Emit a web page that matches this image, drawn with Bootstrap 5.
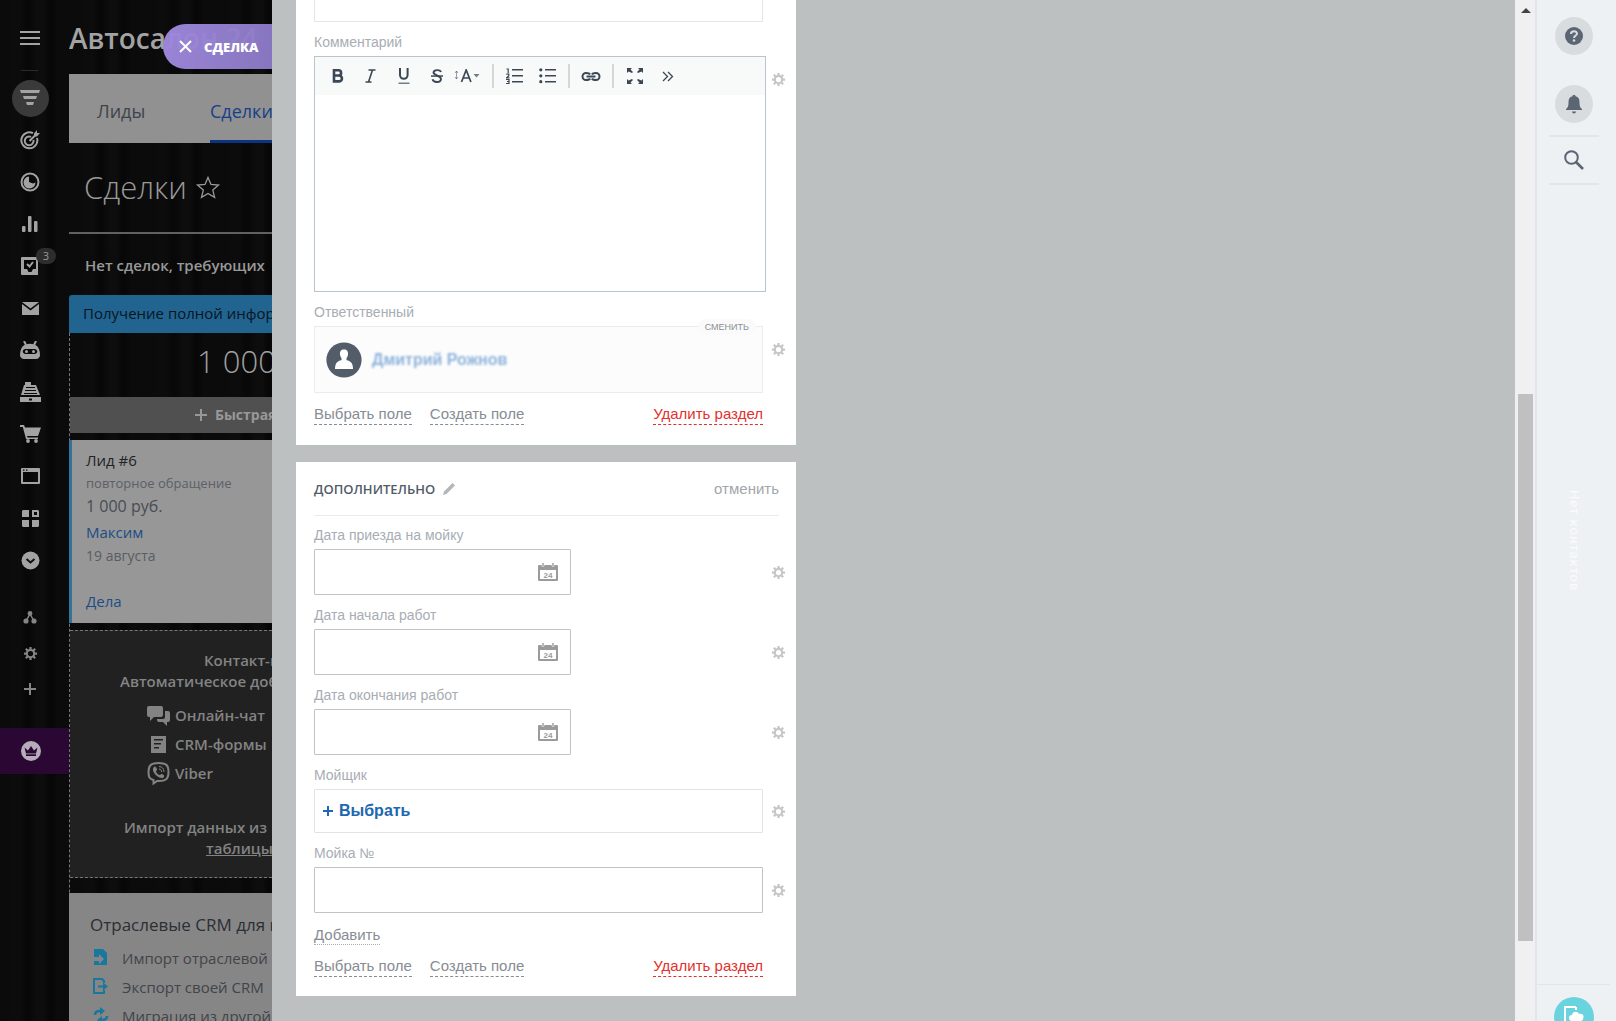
<!DOCTYPE html>
<html lang="ru">
<head>
<meta charset="utf-8">
<meta name="viewport" content="width=device-width, initial-scale=1">
<title>Сделка</title>
<link rel="stylesheet" href="https://cdn.jsdelivr.net/npm/bootstrap@5.3.0/dist/css/bootstrap.min.css">
<script src="https://cdn.jsdelivr.net/npm/bootstrap@5.3.0/dist/js/bootstrap.bundle.min.js"></script>
<style>
body{font-family:"Open Sans","Noto Sans",sans-serif;font-size:15px;line-height:20px;
  background:repeating-linear-gradient(90deg,#0b0b0b 0 9px,#0c0c0c 13px 20px,#080808 26px 30px,#0d0d0d 37px 44px,#070707 49px 52px,#0b0b0b 58px 73px)}
a{text-decoration:none}
button{background:none;border:0;padding:0;color:inherit}
svg{display:block;flex:none;fill:currentColor}
.ln{fill:none;stroke:currentColor}
/* left menu */
.menu{width:69px;color:#a3a3a3}
.menu a{color:inherit;height:42px;padding-right:9px}
.menu .burger{height:77px;padding-bottom:2px;position:relative}
.menu .burger::after{content:"";position:absolute;left:21px;top:70px;width:17px;height:1px;background:#2a2a2a}
.menu .disc{width:37px;height:37px;background:#3a3a3a}
.menu .cnt{left:36px;top:3px;width:20px;height:16px;border-radius:8px;background:#2d2d2d;color:#999;font-size:11px;line-height:16px}
.menu .sm-item{height:36px;color:#858585}
.menu .crown{height:46px;background:#2b0733;color:#b5adb8;padding-right:7px}
.menu .gap-a{height:18px}
.menu .gap-b{height:21px}
/* page behind the slider */
.under{width:203px;white-space:nowrap}
.brand{height:74px;padding-top:19px;font-size:28px;line-height:38px;font-weight:600;color:#a3a3a3}
.tabs{height:69px;background:#919191;font-size:18px;font-weight:500}
.tabs a{color:#3f434b;line-height:75px;flex:none}
.tabs a.t1{margin-left:28px;width:113px}
.tabs a.on{color:#163f8a;border-bottom:3px solid #0c3580;padding-right:20px}
.ttl{height:91px;padding-left:15px;padding-bottom:2px;border-bottom:2px solid #616161;color:#9a9a9a;gap:6px}
.ttl h1{font-size:31px;font-weight:300;line-height:40px}
.note{height:61px;line-height:63px;padding-left:16px;font-size:15px;font-weight:600;color:#999}
.stage{height:38px;line-height:37px;padding-left:14px;font-size:15px;font-weight:400;background:#226490;color:#09151e;border-radius:3px 0 0 0}
.lane{border-left:1px dashed #777}
.sum{height:64px;padding-left:127px;font-size:31px;line-height:57px;font-weight:300;color:#a0a0a0}
.quick{height:36px;margin-bottom:7px;padding-left:125px;font-size:14px;font-weight:700;background:#505050;color:#989898}
.deal{margin-left:-1px;height:183px;margin-bottom:7px;padding:11px 0 0 14px;border-left:3px solid #36739a;background:#979797;color:#474c55}
.deal a{color:#1c4d85}
.d1{color:#1f2226;font-size:15px;line-height:19px;font-weight:500}
.d2{font-size:13px;line-height:26px;color:#5c6068}
.d3{font-size:16px;line-height:20px}
.d4{line-height:32px}
.d5{font-size:14px;line-height:16px;color:#595d63}
.d6{line-height:20px;margin-top:27px}
.cc{height:248px;margin-bottom:15px;background:#212121;border-top:1px dashed #777;border-bottom:1px dashed #777;font-weight:600;color:#838383;font-size:15px;line-height:21px;padding-top:19px}
.cc .ch{height:29px;padding-left:77px;gap:5px}
.c1{padding-left:134px}
.c2{padding-left:50px;margin-bottom:9px}
.c3{padding-left:54px;margin-top:29px}
.c4{padding-left:136px}
.ind{margin-left:-1px;height:160px;background:#868686;padding:21px 0 0 21px;color:#404348}
.ind h2{font-size:17px;line-height:22px;font-weight:500;color:#2c2f34;margin-bottom:7px}
.ind a{height:29px;gap:13px;font-size:15px;font-weight:500;color:#414449;padding-left:3px}
.ind svg{color:#17779c}
.tag{left:163px;top:24px;width:109px;height:45px;border-radius:23px 0 0 23px;background:linear-gradient(90deg,rgba(158,136,220,.97),rgba(140,122,198,.96));color:#fff;font-size:13px;font-weight:800;padding-left:16px;gap:12px}
/* slider */
.slider{background:#bcc0c1;font-family:"Liberation Sans",Arial,sans-serif;padding-left:24px}
.sec{width:500px;background:#fff;padding-left:18px}
.sec + .sec{margin-top:17px}
.s1{height:445px}
.s2{height:534px}
.lbl{display:block;font-size:14px;line-height:28px;color:#a8adb4}
.l1,.l2{margin-top:6px}
.fld{width:449px}
.top-f{height:22px;border:1px solid #e1e7ed;border-top:0}
.box{border-radius:1px;background:#fff;display:block}
.inp{height:46px;border:1px solid #bfc4cb}
.fld .inp{width:100%}
.dt{width:257px;position:relative}
.dt svg{position:absolute;right:13px;top:14px;color:#9b9b9b}
.gr{width:30px;color:#c6c6c6}
.gi{margin:auto}
.g-top{align-self:flex-start;margin-left:-3px;padding-top:16px}
.g-mid{align-self:flex-start;padding-top:16px}
.row-f{margin-bottom:6px}
.editor{width:452px;height:236px;border:1px solid #b9c4cd}
.bar{height:38px;background:#f8faf9;padding-left:6px;color:#3b4754}
.bar button{width:33px;height:32px;display:flex;align-items:center;justify-content:center}
.bar .fs-b{width:28px}
.bar .vr-s{width:2px;height:24px;background:#d3d7da}
.v1{margin:0 4px 0 11px}
.v2{margin:0 4px}
.v3{margin:0 4px 0 5px}
.editor textarea{border:0;width:100%;height:196px;resize:none;display:block;outline:0}
.resp{height:67px;border:1px solid #ececee;background:#fcfcfc;padding-left:11px;gap:10px;position:relative}
.resp .chg{position:absolute;right:6px;top:-8px;height:16px;padding:0 7px;border-radius:8px;background:#fafafa;font-size:9px;line-height:16px;color:#8b9095}
.who{font-size:16px;font-weight:700;color:#8db3dc;filter:blur(1px)}
.acts{width:449px;font-size:15px;line-height:18px;gap:18px}
.acts a,.add{color:#868c93;border-bottom:1px dashed #868c93}
.acts a{padding-bottom:1px}
.acts a.del{color:#e2302d;border-color:#e2302d}
.a1{margin-top:12px}
.a2{margin-top:12px}
.add{display:inline-block;font-size:15px;line-height:18px;border-bottom:1px dotted #a8adb4;margin-top:7px}
.hd{width:465px;height:54px;border-bottom:1px solid #e9ebee;margin-bottom:5px}
.hd h2{font-size:13px;line-height:18px;font-family:"Open Sans",sans-serif;font-weight:600;color:#525c69}
.hd svg{color:#b3b7bc}
.hd .cancel{font-size:15px;color:#a3a6aa}
.pick{height:44px;border:1px solid #e2e3e5;color:#2067b0;font-size:16px;font-weight:700;padding-left:8px;width:100%;gap:6px}
/* scrollbar and right rail */
.sbar{width:20px;background:#f0f0f0;padding:8px 2px 0 3px}
.sbar i{display:block;width:15px;background:#c0c0c0;margin-top:381px;height:547px}
.rail{width:81px;background:#edf1f4;border-left:2px solid #e0e6ed;color:#5b6573;padding-right:6px}
.rail > *{flex:none}
.rail .rd{width:38px;height:38px;background:#d8dcdf;display:flex;align-items:center;justify-content:center}
.r1{margin-top:17px}
.r2{margin-top:30px}
.rail .rl{width:50px;height:50px;border:solid #e2e6e9;border-width:2px 0;margin-top:12px;display:flex;align-items:center;justify-content:center}
.nocon{writing-mode:vertical-rl;color:#fafbfd;font-size:13px;margin-top:305px;height:494px;font-family:Roboto,sans-serif;letter-spacing:1px}
.cloud{width:100%;border-top:1px solid #dfe6ec;padding-top:12px}
.cloud span{width:40px;height:40px;background:#69d4e0;color:#fff;display:flex;justify-content:center;padding-top:9px}
</style>
</head>
<body class="vh-100 overflow-hidden">
<svg width="0" height="0" class="position-absolute"><defs>
<symbol id="gear" viewBox="0 0 16 16"><path fill-rule="evenodd" d="M6.800 1h2.400v2.100l1.400.6 1.600-1.500 1.600 1.600-1.500 1.600.6 1.400H15v2.400h-2.100l-.6 1.400 1.500 1.600-1.600 1.600-1.600-1.500-1.400.6V15H6.800v-2.100l-1.400-.6-1.600 1.500-1.600-1.600 1.500-1.600-.6-1.400H1V6.800h2.100l.6-1.400-1.500-1.600 1.600-1.600 1.600 1.500 1.400-.6zM8 5.200a2.800 2.800 0 1 0 0 5.600 2.800 2.800 0 0 0 0-5.600z"/></symbol>
<symbol id="cal" viewBox="0 0 20 18"><path fill-rule="evenodd" d="M1 2h2.500c0 2 3 2 3 0h7c0 2 3 2 3 0H19a1 1 0 0 1 1 1v14a1 1 0 0 1-1 1H1a1 1 0 0 1-1-1V3a1 1 0 0 1 1-1zm1 5v9h16V7z"/><path d="M4.300 0h1.400v3H4.300zM14.300 0h1.400v3h-1.400z"/><text x="10" y="14.500" text-anchor="middle" font-family="Liberation Sans" font-size="8" font-weight="700">24</text></symbol>
</defs></svg>
<div class="d-flex h-100 position-relative">
<nav class="menu flex-shrink-0 d-flex flex-column" aria-label="Меню">
  <a href="#" class="burger d-flex align-items-center justify-content-center"><svg width="20" height="16"><path d="M0 1h20v2H0zM0 7h20v2H0zM0 13h20v2H0z"/></svg></a>
  <a href="#" class="d-flex align-items-center justify-content-center"><span class="disc rounded-circle d-flex align-items-center justify-content-center"><svg width="20" height="16"><path d="M0 0h20l-1 3H1zM3 6h14l-1 3H4zM6 12h8l-1 3H7z"/></svg></span></a>
  <a href="#" class="d-flex align-items-center justify-content-center"><svg width="20" height="20"><g class="ln" stroke-width="2"><path d="M13 3.200A8 8 0 1 0 17 8"/><path d="M11 6.800A4.400 4.400 0 1 0 13.500 10M9.500 11 17 3.500"/></g><path d="M14 3.500 17 0v3h3l-3 3.500h-3z"/></svg></a>
  <a href="#" class="d-flex align-items-center justify-content-center"><svg width="20" height="20"><circle class="ln" cx="10" cy="10" r="8.500" stroke-width="2"/><path d="M9 4.500V10l4 1.500 2.500-1A6 6 0 1 1 9 4.500z"/></svg></a>
  <a href="#" class="d-flex align-items-center justify-content-center"><svg width="16" height="16"><rect y="10" width="3.500" height="6" rx="1"/><rect x="6" width="3.500" height="16" rx="1"/><rect x="12" y="5" width="3.500" height="11" rx="1"/></svg></a>
  <a href="#" class="d-flex align-items-center justify-content-center position-relative"><svg width="18" height="18"><path fill-rule="evenodd" d="M1 0h16v18H1a1 1 0 0 1-1-1V1a1 1 0 0 1 1-1zm2 3v9h3l1.500 3h3L12 12h3V3z"/><path class="ln" stroke-width="2" d="m6 7 2.500 2.500L12 5"/></svg><span class="cnt position-absolute text-center">3</span></a>
  <a href="#" class="d-flex align-items-center justify-content-center"><svg width="17" height="13"><path d="M0 0h17L8.500 6.500zM0 2l8.500 6.500L17 2v11H0z"/></svg></a>
  <a href="#" class="d-flex align-items-center justify-content-center"><svg width="20" height="18"><path class="ln" stroke-width="2" d="m4 0 2 4M16 0l-2 4"/><path fill-rule="evenodd" d="M3 5c4-3 10-3 14 0 2 2 3 5 3 10-1 2-2 3-4 3H4c-2 0-3-1-4-3 0-5 1-8 3-10zm2 3c-3 1-3 4 0 5h10c3-1 3-4 0-5z"/><circle cx="6.500" cy="10.500" r="1.500"/><circle cx="13.500" cy="10.500" r="1.500"/></svg></a>
  <a href="#" class="d-flex align-items-center justify-content-center"><svg width="21" height="20"><path fill-rule="evenodd" d="M5 3V0h6v3h5l4 10H1L4 3zm1 2v1h9V5zM5 8v1h11V8zm-1 3v1h13v-1z"/><path fill-rule="evenodd" d="M0 15h21v5H0zm9 1.500v2h3v-2z"/></svg></a>
  <a href="#" class="d-flex align-items-center justify-content-center"><svg width="21" height="18"><path d="M0 0h4l1 2.500h16L18 11H7l.5 1.500H18V14H6L2.800 2H0z"/><circle cx="8" cy="16" r="1.900"/><circle cx="16" cy="16" r="1.900"/></svg></a>
  <a href="#" class="d-flex align-items-center justify-content-center"><svg width="19" height="16"><path fill-rule="evenodd" d="M1 0h17a1 1 0 0 1 1 1v14a1 1 0 0 1-1 1H1a1 1 0 0 1-1-1V1a1 1 0 0 1 1-1zm1 4v10h15V4zm0-2.500v1.300h1.500V1.500zm3 0v1.300h1.500V1.500z"/></svg></a>
  <a href="#" class="d-flex align-items-center justify-content-center"><svg width="17" height="17"><path fill-rule="evenodd" d="M1 0h6v7H0V1zM10 0h6l1 1v6h-7zm2 2v3h3V2zM0 10h7v7H1l-1-1zM10 10h7v6l-1 1h-6z"/></svg></a>
  <a href="#" class="d-flex align-items-center justify-content-center"><svg width="19" height="19"><circle cx="9.500" cy="9.500" r="9"/><path fill="none" stroke="#111" stroke-width="2" d="m5.500 8 4 3.500 4-3.500"/></svg></a>
  <div class="gap-a"></div>
  <a href="#" class="sm-item d-flex align-items-center justify-content-center"><svg width="14" height="13"><circle cx="7" cy="2.500" r="2.400"/><circle cx="3" cy="10" r="2.600"/><circle cx="11" cy="10" r="2.600"/><path class="ln" stroke-width="1.500" d="m3 10 4-7 4 7"/></svg></a>
  <a href="#" class="sm-item d-flex align-items-center justify-content-center"><svg width="15" height="15"><use href="#gear"/></svg></a>
  <a href="#" class="sm-item d-flex align-items-center justify-content-center"><svg width="12" height="12"><path d="M5 0h2v5h5v2H7v5H5V7H0V5h5z"/></svg></a>
  <div class="gap-b"></div>
  <a href="#" class="crown d-flex align-items-center justify-content-center"><svg width="20" height="20"><circle cx="10" cy="10" r="10"/><path fill="#2b0733" d="m3.500 6.500 3.500 3 3-4.500 3 4.500 3.500-3L15 12.500H5zM5 13.300h10V15H5z"/></svg></a>
</nav>
<main class="under flex-shrink-0 overflow-hidden">
  <div class="brand">Автосалон 24</div>
  <nav class="tabs d-flex"><a href="#" class="t1">Лиды</a><a href="#" class="on">Сделки</a></nav>
  <div class="ttl d-flex align-items-center"><h1 class="mb-0">Сделки</h1><svg width="31" height="24"><path class="ln" stroke-width="1.300" d="m15 2.500 3 7 7.500.6-5.700 5 1.800 7.300L15 18.500l-6.500 3.900 1.800-7.300-5.800-5L12 9.500z"/></svg></div>
  <div class="note">Нет сделок, требующих</div>
  <div class="stage">Получение полной информации</div>
  <div class="lane">
    <div class="sum">1 000 руб.</div>
    <div class="quick d-flex align-items-center"><svg width="12" height="12"><path d="M5 0h2v5h5v2H7v5H5V7H0V5h5z"/></svg><span class="ms-2">Быстрая сделка</span></div>
    <article class="deal">
      <div class="d1">Лид #6</div>
      <div class="d2">повторное обращение</div>
      <div class="d3">1 000 руб.</div>
      <a href="#" class="d4 d-block">Максим</a>
      <div class="d5">19 августа</div>
      <a href="#" class="d6 d-block">Дела</a>
    </article>
    <section class="cc">
      <div class="c1">Контакт-центр</div>
      <div class="c2">Автоматическое добавление</div>
      <div class="ch d-flex align-items-center"><svg width="23" height="20"><path d="M2 0h12a2 2 0 0 1 2 2v7a2 2 0 0 1-2 2H7l-4 4v-4H2a2 2 0 0 1-2-2V2a2 2 0 0 1 2-2z"/><path d="M18 5h3a2 2 0 0 1 2 2v7a2 2 0 0 1-2 2h-1v4l-4-4h-4a2 2 0 0 1-2-2v-1h6a2 2 0 0 0 2-2z"/></svg>Онлайн-чат</div>
      <div class="ch d-flex align-items-center"><svg width="23" height="17"><path fill-rule="evenodd" d="M4 0h15v17H4zm3 3v1.500h9V3zm0 4v1.500h7V7zm0 4v1.500h5V11z"/></svg>CRM-формы</div>
      <div class="ch d-flex align-items-center"><svg width="23" height="23"><path class="ln" stroke-width="2" d="M11.500 1C4 1 1.500 3.500 1.500 10c0 5 1 7 5 8v3.500L10 19c9 .5 11.500-2 11.500-9S19 1 11.500 1z"/><path d="M7 5c1-1 2 0 3 2 .5 1-1 1.500-1 2.500.5 2 2 3 3.500 3.500 1 0 1.500-1.500 2.500-1 2 1 3 2 1.500 3.500C14 18 5 12 6 6.500z"/><path class="ln" d="M12 4.500c3 0 5 2 5 5.500M12 7c1.800.2 2.600 1.200 2.600 3"/></svg>Viber</div>
      <div class="c3">Импорт данных из</div>
      <div class="c4"><u>таблицы</u></div>
    </section>
    <section class="ind">
      <h2>Отраслевые CRM для вас</h2>
      <a href="#" class="d-flex align-items-center"><svg width="16" height="17"><path fill-rule="evenodd" d="M1 0h9l4 4v12H1v-4h5v3l5-5-5-5v3H1z"/></svg>Импорт отраслевой</a>
      <a href="#" class="d-flex align-items-center"><svg width="16" height="17"><path class="ln" stroke-width="2" d="M11 5V3L9 1H1v14h10v-3"/><path d="M5 7.500h5V4.500l5 4-5 4V9.500H5z"/></svg>Экспорт своей CRM</a>
      <a href="#" class="d-flex align-items-center"><svg width="16" height="17"><path class="ln" stroke-width="2.500" d="M2 8c0-3 2-4 5-4h3M14 9c0 3-2 4-5 4H6"/><path d="m7 0 5 4-5 4zM9 9l-5 4 5 4z"/></svg>Миграция из другой</a>
    </section>
  </div>
</main>
<button class="tag position-absolute d-flex align-items-center"><svg width="13" height="13"><path class="ln" stroke-width="2" d="m1 1 11 11M12 1 1 12"/></svg>СДЕЛКА</button>
<div class="slider flex-grow-1">
  <section class="sec s1">
    <div class="fld top-f"></div>
    <span class="lbl l1">Комментарий</span>
    <div class="d-flex">
      <div class="editor">
        <div class="bar d-flex align-items-center">
          <button aria-label="Полужирный"><svg width="12" height="14"><path class="ln" stroke-width="2.600" d="M2 1.300h4.500a2.600 2.600 0 0 1 0 5.200H2zm0 5.200h5a2.900 2.900 0 0 1 0 5.900H2z"/></svg></button>
          <button aria-label="Курсив"><svg width="11" height="14"><path class="ln" stroke-width="1.600" d="M3.500 1h7M.5 13h6M7.500 1l-4 12"/></svg></button>
          <button aria-label="Подчёркнутый"><svg width="12" height="16"><path class="ln" stroke-width="2" d="M2 0v7a3.800 3.800 0 0 0 7.600 0V0"/><path opacity=".7" d="M.5 14.500h11V16H.5z"/></svg></button>
          <button aria-label="Зачёркнутый"><svg width="12" height="14"><path class="ln" stroke-width="1.900" d="M10 3C9 .5 3 .3 2.500 3.500 2.300 6.500 9.800 6.300 10 10c-.3 4-7.500 4-8.500.3"/><path d="M0 6.300h12v1.500H0z"/></svg></button>
          <button class="fs-b" aria-label="Размер шрифта"><svg width="26" height="14"><path class="ln" opacity=".5" d="M2.500 2v8M1 4l1.500-2L4 4M1 8l1.500 2L4 8"/><path class="ln" stroke-width="1.700" d="m7.500 13 4.700-12 4.700 12M9 9h6.500"/><path opacity=".7" d="M19.500 5h6l-3 3.500z"/></svg></button>
          <span class="vr-s v1"></span>
          <button aria-label="Нумерованный список"><svg width="17" height="16"><path d="M6 1h11v1.500H6zM6 7h11v1.500H6zM6 13h11v1.500H6z"/><path class="ln" stroke-width="1.200" d="M.5 1h1.700v4M.3 6.200h2.500v1.500L.5 9.800h3M0 11.500h3v4H0M1 13.500h2"/></svg></button>
          <button aria-label="Маркированный список"><svg width="17" height="16"><path d="M6 1h11v1.500H6zM6 7h11v1.500H6zM6 13h11v1.500H6z"/><circle cx="1.800" cy="1.800" r="1.600"/><circle cx="1.800" cy="7.800" r="1.600"/><circle cx="1.800" cy="13.700" r="1.600"/></svg></button>
          <span class="vr-s v2"></span>
          <button aria-label="Ссылка"><svg width="20" height="9"><g class="ln" stroke-width="2"><path d="M9 2.500C8.500 1.300 7.500 1 5 1a3.500 3.500 0 0 0 0 7c2.500 0 3.500-.3 4-1.500M11 2.500C11.500 1.300 12.500 1 15 1a3.500 3.500 0 0 1 0 7c-2.500 0-3.500-.3-4-1.500M5.500 4.500h9"/></g></svg></button>
          <span class="vr-s v3"></span>
          <button aria-label="На весь экран"><svg width="16" height="16"><path d="M0 0h5L3.500 1.500 6 4 5 5 1.500 3.500 0 5zM16 0v5l-1.500-1.500L11 5l-1-1 2.500-2.500L11 0zM0 16v-5l1.500 1.500L5 11l1 1-2.500 2.500L5 16zM16 16h-5l1.500-1.500L10 12l1-1 3.500 1.500L16 11z"/></svg></button>
          <button aria-label="Ещё"><svg width="12" height="11"><path class="ln" stroke-width="1.300" d="m1 1 4.500 4.500L1 10M6 1l4.500 4.500L6 10"/></svg></button>
        </div>
        <textarea aria-label="Комментарий"></textarea>
      </div>
      <button class="gr g-top" aria-label="Настройки поля"><svg class="gi" width="15" height="15"><use href="#gear"/></svg></button>
    </div>
    <span class="lbl l2">Ответственный</span>
    <div class="d-flex">
      <div class="fld resp d-flex align-items-center">
        <svg width="36" height="36"><circle cx="18" cy="18" r="17.600" fill="#535c69"/><path fill="#fff" d="M18 7.500c3.200 0 4.300 2 4 5-.2 2-1 3-1.500 3.500V18c3 1 6.500 2 6.500 9H9c0-7 3.500-8 6.500-9v-2c-.5-.5-1.300-1.500-1.500-3.500-.3-3 .8-5 4-5z"/></svg>
        <a href="#" class="who">Дмитрий Рожнов</a>
        <button class="chg">СМЕНИТЬ</button>
      </div>
      <button class="gr g-mid" aria-label="Настройки поля"><svg class="gi" width="15" height="15"><use href="#gear"/></svg></button>
    </div>
    <div class="acts a1 d-flex"><a href="#">Выбрать поле</a><a href="#">Создать поле</a><a href="#" class="del ms-auto">Удалить раздел</a></div>
  </section>
  <section class="sec s2">
    <header class="hd d-flex align-items-center"><h2 class="mb-0">ДОПОЛНИТЕЛЬНО</h2><svg class="ms-2" width="13" height="12"><path d="m0 12 1-3.500L9.500 0l2.500 2.500L3.500 11z"/></svg><button class="cancel ms-auto">отменить</button></header>
    <label class="lbl" for="f1">Дата приезда на мойку</label>
    <div class="d-flex row-f align-items-center"><div class="fld"><div class="dt"><input id="f1" class="box inp" type="text"><svg width="20" height="18"><use href="#cal"/></svg></div></div><button class="gr" aria-label="Настройки поля"><svg class="gi" width="15" height="15"><use href="#gear"/></svg></button></div>
    <label class="lbl" for="f2">Дата начала работ</label>
    <div class="d-flex row-f align-items-center"><div class="fld"><div class="dt"><input id="f2" class="box inp" type="text"><svg width="20" height="18"><use href="#cal"/></svg></div></div><button class="gr" aria-label="Настройки поля"><svg class="gi" width="15" height="15"><use href="#gear"/></svg></button></div>
    <label class="lbl" for="f3">Дата окончания работ</label>
    <div class="d-flex row-f align-items-center"><div class="fld"><div class="dt"><input id="f3" class="box inp" type="text"><svg width="20" height="18"><use href="#cal"/></svg></div></div><button class="gr" aria-label="Настройки поля"><svg class="gi" width="15" height="15"><use href="#gear"/></svg></button></div>
    <label class="lbl" for="f4">Мойщик</label>
    <div class="d-flex row-f align-items-center"><div class="fld"><button id="f4" class="box pick d-flex align-items-center"><svg width="10" height="10"><path d="M4 0h2v4h4v2H6v4H4V6H0V4h4z"/></svg>Выбрать</button></div><button class="gr" aria-label="Настройки поля"><svg class="gi" width="15" height="15"><use href="#gear"/></svg></button></div>
    <label class="lbl" for="f5">Мойка №</label>
    <div class="d-flex row-f align-items-center"><div class="fld"><input id="f5" class="box inp" type="text"></div><button class="gr" aria-label="Настройки поля"><svg class="gi" width="15" height="15"><use href="#gear"/></svg></button></div>
    <a href="#" class="add">Добавить</a>
    <div class="acts a2 d-flex"><a href="#">Выбрать поле</a><a href="#">Создать поле</a><a href="#" class="del ms-auto">Удалить раздел</a></div>
  </section>
</div>
<div class="sbar flex-shrink-0"><svg class="mx-auto" width="10" height="5"><path fill="#444" d="m0 5 5-5 5 5z"/></svg><i></i></div>
<aside class="rail flex-shrink-0 d-flex flex-column align-items-center overflow-hidden">
  <button class="rd rounded-circle r1" aria-label="Помощь"><svg width="18" height="18"><circle cx="9" cy="9" r="9"/><path fill="none" stroke="#d8dcdf" stroke-width="2" d="M6 7c0-3.500 6-3.500 6-.3C12 8.500 9 8.500 9 11"/><circle cx="9" cy="13.500" r="1.300" fill="#d8dcdf"/></svg></button>
  <button class="rd rounded-circle r2" aria-label="Уведомления"><svg width="16" height="19"><path d="M8 0c1 0 1.500.5 1.500 1.300 3 .7 4 3 4 5.700 0 4 .5 5.500 2.500 7v1H0v-1c2-1.500 2.500-3 2.500-7 0-2.700 1-5 4-5.700C6.500.5 7 0 8 0zM6 16.500h4c0 2.500-4 2.500-4 0z"/></svg></button>
  <button class="rl" aria-label="Поиск"><svg width="20" height="20"><g class="ln"><circle cx="7.500" cy="7.500" r="6.300" stroke-width="2"/><path stroke-width="2.600" d="m12 12 7 7"/></g></svg></button>
  <div class="nocon">Нет контактов</div>
  <div class="cloud d-flex justify-content-center"><span class="rounded-circle"><svg width="20" height="20"><path class="ln" stroke-width="2" d="M12 1H1v16h6M12 1v3"/><path d="M8 15a3 3 0 0 1 0-6c.5-4 6-4 7-1 3-1 5 1 4.500 3.500S18 15 17 15z"/></svg></span></div>
</aside>
</div>
</body>
</html>
